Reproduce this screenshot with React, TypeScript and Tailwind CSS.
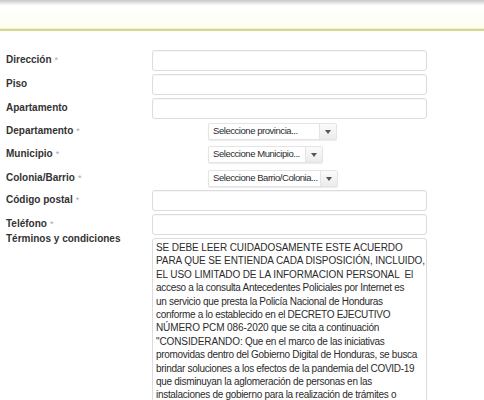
import React from 'react'

const font = { fontFamily: '"Liberation Sans", Arial, sans-serif' }

// [uppercase part, rest] so the caps can keep their own spacing
const terms: [string, string][] = [
    ['SE DEBE LEER CUIDADOSAMENTE ESTE ACUERDO', ''],
    ['PARA QUE SE ENTIENDA CADA DISPOSICIÓN, INCLUIDO,', ''],
    ['EL USO LIMITADO DE LA INFORMACION PERSONAL', '  El'],
    ['', 'acceso a la consulta Antecedentes Policiales por Internet es'],
    ['', 'un servicio que presta la Policía Nacional de Honduras'],
    ['', 'conforme a lo establecido en el DECRETO EJECUTIVO'],
    ['NÚMERO PCM 086-2020', ' que se cita a continuación'],
    ['"CONSIDERANDO:', ' Que en el marco de las iniciativas'],
    ['', 'promovidas dentro del Gobierno Digital de Honduras, se busca'],
    ['', 'brindar soluciones a los efectos de la pandemia del COVID-19'],
    ['', 'que disminuyan la aglomeración de personas en las'],
    ['', 'instalaciones de gobierno para la realización de trámites o'],
]

function Label({ text, required }: { text: string; required?: boolean }) {
    return (
        <div className="relative -top-[1px] w-[152px] shrink-0 pl-[6px] text-[10px] leading-[14px] font-bold text-[#333]">
            {text}
            {required && <span className="ml-[3px] text-[9px] font-normal text-[#aaa]">*</span>}
        </div>
    )
}

function TextInput() {
    return (
        <div className="h-[21px] w-[275px] rounded-[3px] border border-[#dcdcdc] bg-white shadow-[inset_0_1px_1px_rgba(0,0,0,0.04)]" />
    )
}

function Select({ text, width }: { text: string; width: number }) {
    return (
        <div className="ml-[56px] flex h-[17px] rounded-[2px] border border-[#e4e4e4] bg-white shadow-[0_1px_1px_rgba(0,0,0,0.08)]" style={{ width }}>
            <div className="flex min-w-0 flex-1 items-center whitespace-nowrap pl-[4px] text-[9.5px] tracking-[-0.45px] text-[#2b2b2b]">{text}</div>
            <div className="flex w-[17px] shrink-0 items-center justify-center border-l border-[#e4e4e4] bg-gradient-to-b from-[#fbfbfb] to-[#ebebeb]">
                <svg width="6" height="4" viewBox="0 0 6 4">
                    <path d="M0 0 L6 0 L3 4 Z" fill="#555" />
                </svg>
            </div>
        </div>
    )
}

export default function App() {
    return (
        <div className="h-[400px] w-[484px] overflow-hidden bg-white" style={font}>
            <div className="h-[28px] bg-gradient-to-b from-[#c9c9c9] via-white via-[20%] to-[#fdfdf2]" />
            <div className="h-[1px] bg-[#f0f2cf]" />
            <div className="h-[2px] bg-[#d4d78f]" />

            <div className="flex flex-col pt-[19px]">
                <div className="flex items-center">
                    <Label text="Dirección" required />
                    <TextInput />
                </div>
                <div className="mt-[3px] flex items-center">
                    <Label text="Piso" />
                    <TextInput />
                </div>
                <div className="mt-[3px] flex items-center">
                    <Label text="Apartamento" />
                    <TextInput />
                </div>
                <div className="mt-[4px] flex items-center">
                    <Label text="Departamento" required />
                    <Select text="Seleccione provincia..." width={129} />
                </div>
                <div className="mt-[6px] flex items-center">
                    <Label text="Municipio" required />
                    <Select text="Seleccione Municipio..." width={115} />
                </div>
                <div className="mt-[7px] flex items-center">
                    <Label text="Colonia/Barrio" required />
                    <Select text="Seleccione Barrio/Colonia..." width={130} />
                </div>
                <div className="mt-[3px] flex items-center">
                    <Label text="Código postal" required />
                    <TextInput />
                </div>
                <div className="mt-[3px] flex items-center">
                    <Label text="Teléfono" required />
                    <TextInput />
                </div>
                <div className="mt-[3px] flex items-start">
                    <div className="-mt-[5px]">
                        <Label text="Términos y condiciones" />
                    </div>
                    <div className="h-[170px] w-[275px] overflow-hidden rounded-[3px] border border-[#dcdcdc] bg-white pl-[3px] pt-[2px] text-[10px] leading-[13.4px] tracking-[-0.3px] text-[#2b2b2b]">
                        {terms.map(([caps, rest], i) => (
                            <div key={i} className="whitespace-pre">
                                {caps && <span className="tracking-[-0.1px]">{caps}</span>}
                                {rest}
                            </div>
                        ))}
                    </div>
                </div>
            </div>
        </div>
    )
}
